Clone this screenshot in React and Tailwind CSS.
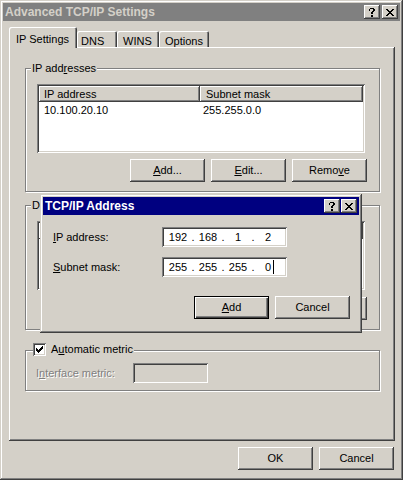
import React from "react";

const RAISED =
  "shadow-[inset_-1px_-1px_#404040,inset_1px_1px_#ffffff,inset_-2px_-2px_#808080,inset_2px_2px_#d4d0c8]";
const SUNKEN =
  "shadow-[inset_1px_1px_#808080,inset_-1px_-1px_#ffffff,inset_2px_2px_#404040,inset_-2px_-2px_#d4d0c8]";

function Btn({ children, className = "", def = false }) {
  return (
    <div
      className={
        "w-[75px] h-[23px] flex items-center justify-center bg-[#d4d0c8] leading-none " +
        (def
          ? "shadow-[inset_1px_1px_#000000,inset_-1px_-1px_#000000,inset_2px_2px_#ffffff,inset_-2px_-2px_#404040,inset_-3px_-3px_#808080] "
          : RAISED + " ") +
        className
      }
    >
      {children}
    </div>
  );
}

function CapBtn({ kind }) {
  return (
    <div className={"w-[16px] h-[14px] bg-[#d4d0c8] flex items-center justify-center " + RAISED}>
      {kind === "help" ? (
        <svg width="8" height="9" viewBox="0 0 8 9" shapeRendering="crispEdges">
          <path d="M1 1h1v2H1zM2 0h4v1H2zM6 1h1v2H6zM5 3h1v1H5zM3 4h2v1H3zM3 5h2v1H3zM3 7h2v2H3z" fill="#000" />
          <path d="M2 0h1v1H2zM5 1h1v2H5zM4 3h1v1H4z" fill="#000" />
        </svg>
      ) : (
        <svg width="8" height="7" viewBox="0 0 8 7" shapeRendering="crispEdges">
          <path d="M0 0h2v1H0zM6 0h2v1H6zM1 1h2v1H1zM5 1h2v1H5zM2 2h4v1H2zM3 3h2v1H3zM2 4h4v1H2zM1 5h2v1H1zM5 5h2v1H5zM0 6h2v1H0zM6 6h2v1H6z" fill="#000" />
        </svg>
      )}
    </div>
  );
}

function ListView({ rows }) {
  return (
    <div className={"w-[328px] h-[69px] bg-white p-[2px] flex flex-col " + SUNKEN}>
      <div className="flex h-[16px] shrink-0">
        <div className={"w-[161px] h-full flex items-center pl-[5px] bg-[#d4d0c8] " + RAISED}>IP address</div>
        <div className={"flex-1 h-full flex items-center pl-[6px] bg-[#d4d0c8] " + RAISED}>Subnet mask</div>
      </div>
      {rows.map((r, i) => (
        <div key={i} className="flex h-[14px] items-center mt-[1px]">
          <div className="w-[161px] pl-[5px]">{r[0]}</div>
          <div className="flex-1 pl-[3px]">{r[1]}</div>
        </div>
      ))}
    </div>
  );
}

function Group({ children, className = "" }) {
  return (
    <div
      className={
        "relative w-[355px] border border-[#808080] shadow-[1px_1px_0_#ffffff,inset_1px_1px_0_#ffffff] " +
        className
      }
    >
      {children}
    </div>
  );
}

function IpField({ parts, caret }) {
  return (
    <div className={"w-[125px] h-[20px] bg-white flex items-center pl-[4px] " + SUNKEN}>
      {parts.map((p, i) => (
        <React.Fragment key={i}>
          <div className="w-[24px] text-center leading-none relative">
            {p}
            {caret && i === parts.length - 1 ? (
              <span className="absolute right-[6px] top-[-2px] w-[1px] h-[14px] bg-black" />
            ) : null}
          </div>
          {i < parts.length - 1 ? <div className="w-[6px] text-center leading-none">.</div> : null}
        </React.Fragment>
      ))}
    </div>
  );
}

export default function App() {
  return (
    <div
      className={
        "w-[403px] h-[480px] bg-[#d4d0c8] relative p-[3px] flex flex-col text-[11px] text-black font-['Liberation_Sans',Arial,sans-serif] shadow-[inset_-1px_-1px_#404040,inset_1px_1px_#d4d0c8,inset_-2px_-2px_#808080,inset_2px_2px_#ffffff]"
      }
    >
      {/* Title bar */}
      <div className="h-[18px] bg-[#808080] flex items-center pl-[2px] pr-[2px] shrink-0">
        <div className="flex-1 font-bold text-[12px] text-[#d4d0c8] leading-none">Advanced TCP/IP Settings</div>
        <div className="flex gap-[2px]">
          <CapBtn kind="help" />
          <CapBtn kind="close" />
        </div>
      </div>

      {/* Tabs */}
      <div className="ml-[6px] mr-[5px] mt-[6px] flex flex-col">
        <div className="flex items-end h-[20px]">
          <div className="relative z-10 w-[68px] h-[21px] -mb-[1px] bg-[#d4d0c8] pl-[7px] pt-[4px] rounded-t-[2px] shadow-[inset_1px_1px_#ffffff,inset_-1px_0_#404040,inset_-2px_0_#808080]">
            IP Settings
          </div>
          <div className="w-[40px] h-[16px] pl-[4px] pt-[2px] rounded-t-[2px] shadow-[inset_1px_1px_#ffffff,inset_-1px_0_#404040,inset_-2px_0_#808080]">
            DNS
          </div>
          <div className="w-[42px] h-[16px] pl-[6px] pt-[2px] rounded-t-[2px] shadow-[inset_1px_1px_#ffffff,inset_-1px_0_#404040,inset_-2px_0_#808080]">
            WINS
          </div>
          <div className="w-[50px] h-[16px] pl-[6px] pt-[2px] rounded-t-[2px] shadow-[inset_1px_1px_#ffffff,inset_-1px_0_#404040,inset_-2px_0_#808080]">
            Options
          </div>
        </div>

        {/* Panel */}
        <div className={"h-[394px] flex flex-col pl-[16px] pt-[21px] " + RAISED}>
          <Group className="h-[124px] pl-[11px] pt-[15px] pr-[12px]">
            <span className="absolute left-[5px] top-[-7px] px-[1px] bg-[#d4d0c8] leading-[13px]">
              IP add<u>r</u>esses
            </span>
            <ListView rows={[["10.100.20.10", "255.255.0.0"]]} />
            <div className="flex justify-end gap-[6px] mt-[6px]">
              <Btn>
                <span><u>A</u>dd...</span>
              </Btn>
              <Btn>
                <span><u>E</u>dit...</span>
              </Btn>
              <Btn>
                <span>Remo<u>v</u>e</span>
              </Btn>
            </div>
          </Group>

          <Group className="h-[125px] mt-[13px] pl-[11px] pt-[15px] pr-[12px]">
            <span className="absolute left-[5px] top-[-7px] px-[1px] bg-[#d4d0c8] leading-[13px]">
              De<u>f</u>ault gateways:
            </span>
            <ListView rows={[]} />
            <div className="flex justify-end gap-[6px] mt-[7px]">
              <Btn />
              <Btn />
              <Btn />
            </div>
          </Group>

          <Group className="h-[41px] mt-[20px] pl-[10px] pt-[12px]">
            <div className="absolute left-[7px] top-[-8px] flex items-center bg-[#d4d0c8] pr-[1px]">
              <div className={"w-[13px] h-[13px] bg-white flex items-center justify-center " + SUNKEN}>
                <svg width="7" height="7" viewBox="0 0 7 7" shapeRendering="crispEdges">
                  <path d="M0 2h1v3H0zM1 3h1v3H1zM2 4h1v3H2zM3 3h1v3H3zM4 2h1v3H4zM5 1h1v3H5zM6 0h1v3H6z" fill="#000" />
                </svg>
              </div>
              <span className="ml-[5px] leading-[13px]">
                A<u>u</u>tomatic metric
              </span>
            </div>
            <div className="flex items-center">
              <div className="w-[97px] text-[#808080] [text-shadow:1px_1px_0_#ffffff]">
                I<u>n</u>terface metric:
              </div>
              <div className={"w-[75px] h-[20px] bg-[#d4d0c8] " + SUNKEN} />
            </div>
          </Group>
        </div>
      </div>

      {/* OK / Cancel */}
      <div className="flex justify-end gap-[6px] mt-[6px] mr-[6px]">
        <Btn>OK</Btn>
        <Btn>Cancel</Btn>
      </div>

      {/* TCP/IP Address dialog */}
      <div
        className={
          "absolute left-[40px] top-[194px] w-[322px] h-[139px] bg-[#d4d0c8] p-[3px] flex flex-col shadow-[inset_-1px_-1px_#404040,inset_1px_1px_#d4d0c8,inset_-2px_-2px_#808080,inset_2px_2px_#ffffff]"
        }
      >
        <div className="h-[18px] bg-[#000080] flex items-center pl-[2px] pr-[2px] shrink-0">
          <div className="flex-1 font-bold text-[12px] text-white leading-none">TCP/IP Address</div>
          <div className="flex gap-[1px]">
            <CapBtn kind="help" />
            <CapBtn kind="close" />
          </div>
        </div>
        <div className="flex flex-col pl-[10px] pt-[12px] pr-[9px]">
          <div className="flex items-center h-[20px]">
            <div className="w-[109px]">
              <u>I</u>P address:
            </div>
            <IpField parts={["192", "168", "1", "2"]} />
          </div>
          <div className="flex items-center h-[20px] mt-[10px]">
            <div className="w-[109px]">
              <u>S</u>ubnet mask:
            </div>
            <IpField parts={["255", "255", "255", "0"]} caret />
          </div>
          <div className="flex justify-end gap-[6px] mt-[19px]">
            <Btn def>
              <span><u>A</u>dd</span>
            </Btn>
            <Btn>Cancel</Btn>
          </div>
        </div>
      </div>
    </div>
  );
}
